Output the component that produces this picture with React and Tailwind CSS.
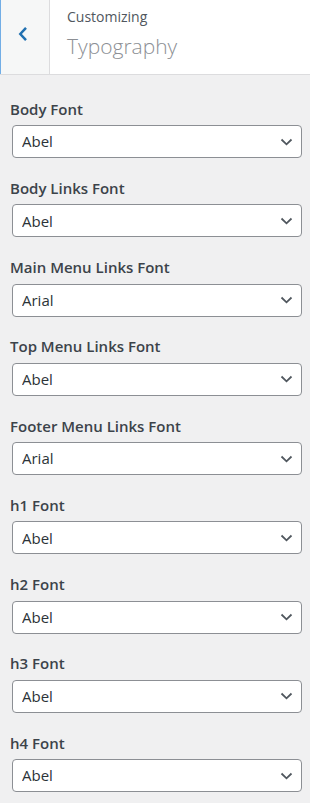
const controls = [
  { label: 'Body Font', value: 'Abel' },
  { label: 'Body Links Font', value: 'Abel' },
  { label: 'Main Menu Links Font', value: 'Arial' },
  { label: 'Top Menu Links Font', value: 'Abel' },
  { label: 'Footer Menu Links Font', value: 'Arial' },
  { label: 'h1 Font', value: 'Abel' },
  { label: 'h2 Font', value: 'Abel' },
  { label: 'h3 Font', value: 'Abel' },
  { label: 'h4 Font', value: 'Abel' },
];

const FontSelect = ({ value }) => (
  <div className="relative">
    <select
      defaultValue={value}
      className="w-full h-[33px] appearance-none bg-white border border-[#8c8f94] rounded-[4px] pl-[9px] pr-8 text-[15px] text-[#2c3338] outline-none"
    >
      <option>Abel</option>
      <option>Arial</option>
    </select>
    <svg
      className="absolute right-[9px] top-1/2 -translate-y-1/2 w-[13px] h-[8px] pointer-events-none"
      viewBox="0 0 13 8"
      fill="none"
      stroke="#50575e"
      strokeWidth="1.8"
    >
      <path d="M1.5 1.5 6.5 6.3 11.5 1.5" />
    </svg>
  </div>
);

export default function App() {
  return (
    <div className="w-[310px] h-[803px] bg-[#f0f0f1] overflow-hidden font-['Open_Sans','Noto_Sans',sans-serif]">
      {/* Section header */}
      <div className="flex h-[75px] bg-white border-b border-[#dcdcde]">
        <button className="w-[50px] shrink-0 flex items-start pl-[17px] pt-[26px] bg-[#f6f7f7] border-l border-l-[#72aee6] border-r border-r-[#dcdcde]">
          <svg viewBox="0 0 10 16" className="w-[10px] h-[16px]" fill="none" stroke="#2271b1" strokeWidth="2.5">
            <path d="M8 1.8 2.3 8l5.7 6.2" />
          </svg>
        </button>
        <div className="pl-[17px] pt-[6px]">
          <div className="text-[14px] leading-[21px] text-[#50575e]">Customizing</div>
          <div className="text-[21px] leading-[30px] font-light text-[#8c8f94] mt-[4px]">Typography</div>
        </div>
      </div>

      {/* Controls */}
      <div className="pt-[21.5px] pl-[10px] pr-[8px]">
        {controls.map((c) => (
          <div key={c.label} className="mb-[17.75px]">
            <label className="block text-[15px] leading-[24.5px] font-semibold text-[#3c434a] mb-[4px]">
              {c.label}
            </label>
            <div className="pl-[2px]">
              <FontSelect value={c.value} />
            </div>
          </div>
        ))}
      </div>
    </div>
  );
}
